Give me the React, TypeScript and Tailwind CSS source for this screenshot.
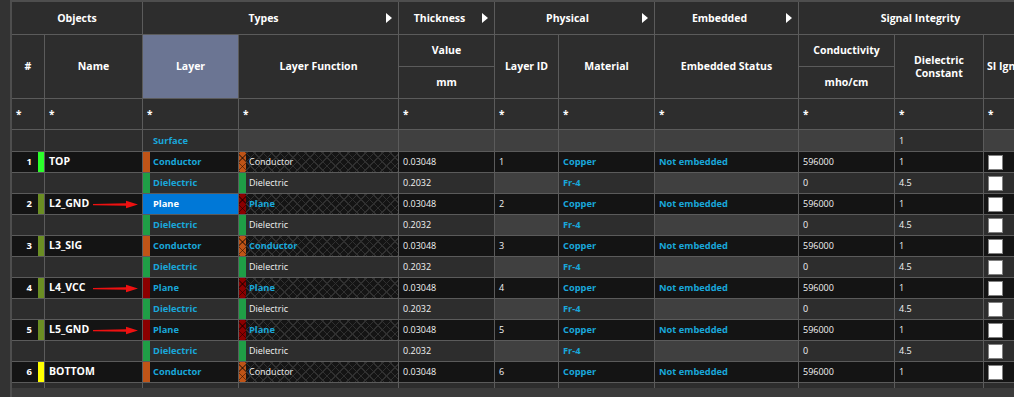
import React from "react";

const GRID = "border-r border-b border-[#5b5b5b]";
const DARK = "bg-[#141414]";
const MID = "bg-[#2d2d2d]";
const RO = "bg-[#404040]";
const CYAN = "text-[#19a7da] font-bold text-[9.3px]";
const VAL = "text-[#f2f2f2] text-[9px]";
const HATCH =
  "[background-image:repeating-linear-gradient(45deg,#303030_0px,#303030_1px,transparent_1px,transparent_6px),repeating-linear-gradient(-45deg,#303030_0px,#303030_1px,transparent_1px,transparent_6px)]";
const HATCH_STRIP =
  "[background-image:repeating-linear-gradient(45deg,rgba(0,0,0,0.45)_0px,rgba(0,0,0,0.45)_1px,transparent_1px,transparent_6px),repeating-linear-gradient(-45deg,rgba(0,0,0,0.45)_0px,rgba(0,0,0,0.45)_1px,transparent_1px,transparent_6px)]";

type Kind = "cond" | "plane" | "diel";

interface LayerRow {
  kind: Kind;
  n?: number;
  name?: string;
  obj?: string;
  fnCyan?: boolean;
  selected?: boolean;
  arrow?: boolean;
}

const rows: LayerRow[] = [
  { kind: "cond", n: 1, name: "TOP", obj: "bg-[#2bff2b]" },
  { kind: "diel" },
  { kind: "plane", n: 2, name: "L2_GND", obj: "bg-[#6b8e23]", selected: true, arrow: true },
  { kind: "diel" },
  { kind: "cond", n: 3, name: "L3_SIG", obj: "bg-[#6b8e23]", fnCyan: true },
  { kind: "diel" },
  { kind: "plane", n: 4, name: "L4_VCC", obj: "bg-[#6b8e23]", arrow: true },
  { kind: "diel" },
  { kind: "plane", n: 5, name: "L5_GND", obj: "bg-[#6b8e23]", arrow: true },
  { kind: "diel" },
  { kind: "cond", n: 6, name: "BOTTOM", obj: "bg-[#ffff00]" },
];

function Td({
  bg,
  h = "h-[20px]",
  children,
}: {
  bg: string;
  h?: string;
  children?: React.ReactNode;
}) {
  return (
    <td className={`${GRID} ${bg} p-0 align-top`}>
      <div className={`relative flex ${h} items-center overflow-hidden whitespace-nowrap`}>{children}</div>
    </td>
  );
}

function Strip({ color, hatched }: { color: string; hatched?: boolean }) {
  return <div className={`h-full w-[7px] shrink-0 ${color} ${hatched ? HATCH_STRIP : ""}`} />;
}

function Arrow() {
  return (
    <svg width="46" height="9" viewBox="0 0 46 9" className="absolute left-[48px] top-[5.5px]">
      <path d="M0 4 L33 3.2 L33 0.8 L45 4.5 L33 8.2 L33 5.8 L0 5.2 Z" fill="#ee1111" />
    </svg>
  );
}

function Check() {
  return <div className="ml-[4px] h-[15px] w-[15px] border border-[#808080] bg-white" />;
}

function BodyRow({ row }: { row: LayerRow }) {
  if (row.kind === "diel") {
    return (
      <tr>
        <Td bg={MID} />
        <Td bg={MID} />
        <Td bg={MID}>
          <Strip color="bg-[#1f9e46]" />
          <span className={`pl-[3px] ${CYAN}`}>Dielectric</span>
        </Td>
        <Td bg={MID}>
          <Strip color="bg-[#1f9e46]" />
          <span className={`pl-[3px] ${VAL} text-[9.3px]`}>Dielectric</span>
        </Td>
        <Td bg={MID}>
          <span className={`pl-1 ${VAL}`}>0.2032</span>
        </Td>
        <Td bg={RO} />
        <Td bg={MID}>
          <span className={`pl-1 ${CYAN}`}>Fr-4</span>
        </Td>
        <Td bg={RO} />
        <Td bg={MID}>
          <span className={`pl-1 ${VAL}`}>0</span>
        </Td>
        <Td bg={MID}>
          <span className={`pl-1 ${VAL}`}>4.5</span>
        </Td>
        <Td bg={MID}>
          <Check />
        </Td>
      </tr>
    );
  }

  const plane = row.kind === "plane";
  const strip = plane ? "bg-[#8b0000]" : "bg-[#bf5417]";
  const label = plane ? "Plane" : "Conductor";
  const fnCyan = plane || row.fnCyan;

  return (
    <tr>
      <Td bg={DARK}>
        <div className="flex h-full w-full justify-end">
          <span className="flex items-center pr-[6px] text-[9.5px] font-bold text-white">{row.n}</span>
          <div className={`h-full w-[6px] ${row.obj}`} />
        </div>
      </Td>
      <Td bg={DARK}>
        <span className="pl-1 text-[10.5px] font-bold text-white">{row.name}</span>
        {row.arrow && <Arrow />}
      </Td>
      {row.selected ? (
        <Td bg="bg-[#0078d7]">
          <span className="pl-[10px] text-[9.3px] font-bold text-white">{label}</span>
        </Td>
      ) : (
        <Td bg={DARK}>
          <Strip color={strip} />
          <span className={`pl-[3px] ${CYAN}`}>{label}</span>
        </Td>
      )}
      <Td bg={`${DARK} ${HATCH}`}>
        <Strip color={strip} hatched />
        <span className={`pl-[3px] ${fnCyan ? CYAN : `${VAL} text-[9.3px]`}`}>{label}</span>
      </Td>
      <Td bg={DARK}>
        <span className={`pl-1 ${VAL}`}>0.03048</span>
      </Td>
      <Td bg={DARK}>
        <span className={`pl-1 ${VAL}`}>{row.n}</span>
      </Td>
      <Td bg={DARK}>
        <span className={`pl-1 ${CYAN}`}>Copper</span>
      </Td>
      <Td bg={DARK}>
        <span className={`pl-1 ${CYAN}`}>Not embedded</span>
      </Td>
      <Td bg={DARK}>
        <span className={`pl-1 ${VAL}`}>596000</span>
      </Td>
      <Td bg={DARK}>
        <span className={`pl-1 ${VAL}`}>1</span>
      </Td>
      <Td bg={DARK}>
        <Check />
      </Td>
    </tr>
  );
}

function Th({
  children,
  colSpan,
  rowSpan,
  arrow,
  selected,
  h,
}: {
  children?: React.ReactNode;
  colSpan?: number;
  rowSpan?: number;
  arrow?: boolean;
  selected?: boolean;
  h?: string;
}) {
  return (
    <th
      colSpan={colSpan}
      rowSpan={rowSpan}
      className={`${GRID} relative p-0 text-center align-middle text-[10.5px] font-bold leading-[13px] text-white ${
        selected ? "bg-[#6b7593]" : "bg-[#2d2d2d]"
      }`}
    >
      <div className={`flex ${h ?? ""} items-center justify-center whitespace-nowrap ${arrow ? "pr-[14px]" : ""}`}>
        {children}
      </div>
      {arrow && (
        <span className="absolute right-[6px] top-[11px] h-0 w-0 border-y-[5px] border-l-[6px] border-y-transparent border-l-white" />
      )}
    </th>
  );
}

function Star() {
  return (
    <td className={`${GRID} ${MID} p-0 align-top`}>
      <div className="flex h-[30px] items-center pl-1 text-[10px] font-bold text-white">*</div>
    </td>
  );
}

export default function App() {
  const widths = [33, 98, 96, 160, 96, 64, 96, 144, 96, 89, 59];
  return (
    <div className="flex h-[397px] w-[1014px] overflow-hidden bg-[#333333] pl-[10px] [font-family:'Open_Sans',sans-serif]">
      <div className="flex flex-1 flex-col overflow-hidden border-l-2 border-t-2 border-[#4e4e4e] bg-[#3b3b3b]">
        <div className="h-[386px] overflow-hidden">
          <table className="table-fixed border-separate border-spacing-0" style={{ width: 1031 }}>
            <colgroup>
              {widths.map((w, i) => (
                <col key={i} style={{ width: w }} />
              ))}
            </colgroup>
            <thead>
              <tr>
                <Th colSpan={2} h="h-[32px]">Objects</Th>
                <Th colSpan={2} arrow>Types</Th>
                <Th arrow>Thickness</Th>
                <Th colSpan={2} arrow>Physical</Th>
                <Th arrow>Embedded</Th>
                <Th colSpan={3}>Signal Integrity</Th>
              </tr>
              <tr>
                <Th rowSpan={2}>#</Th>
                <Th rowSpan={2}>Name</Th>
                <Th rowSpan={2} selected>
                  Layer
                </Th>
                <Th rowSpan={2}>Layer Function</Th>
                <Th h="h-[31px]">Value</Th>
                <Th rowSpan={2}>Layer ID</Th>
                <Th rowSpan={2}>Material</Th>
                <Th rowSpan={2}>Embedded Status</Th>
                <Th>Conductivity</Th>
                <Th rowSpan={2}>
                  Dielectric
                  <br />
                  Constant
                </Th>
                <Th rowSpan={2}>
                  <span className="w-full pl-[3px] text-left">SI Ignore</span>
                </Th>
              </tr>
              <tr>
                <Th h="h-[31px]">mm</Th>
                <Th>mho/cm</Th>
              </tr>
            </thead>
            <tbody>
              <tr>
                {Array.from({ length: 11 }).map((_, i) => (
                  <Star key={i} />
                ))}
              </tr>
              <tr>
                <Td bg={MID} h="h-[21px]" />
                <Td bg={MID} h="h-[21px]" />
                <Td bg={MID} h="h-[21px]">
                  <span className={`pl-[10px] ${CYAN}`}>Surface</span>
                </Td>
                <Td bg={RO} h="h-[21px]" />
                <Td bg={RO} h="h-[21px]" />
                <Td bg={RO} h="h-[21px]" />
                <Td bg={RO} h="h-[21px]" />
                <Td bg={RO} h="h-[21px]" />
                <Td bg={RO} h="h-[21px]" />
                <Td bg={MID} h="h-[21px]">
                  <span className={`pl-1 ${VAL}`}>1</span>
                </Td>
                <Td bg={RO} h="h-[21px]" />
              </tr>
              {rows.map((r, i) => (
                <BodyRow key={i} row={r} />
              ))}
              <tr>
                {widths.map((_, i) => (
                  <Td key={i} bg={MID} />
                ))}
              </tr>
            </tbody>
          </table>
        </div>
      </div>
    </div>
  );
}
